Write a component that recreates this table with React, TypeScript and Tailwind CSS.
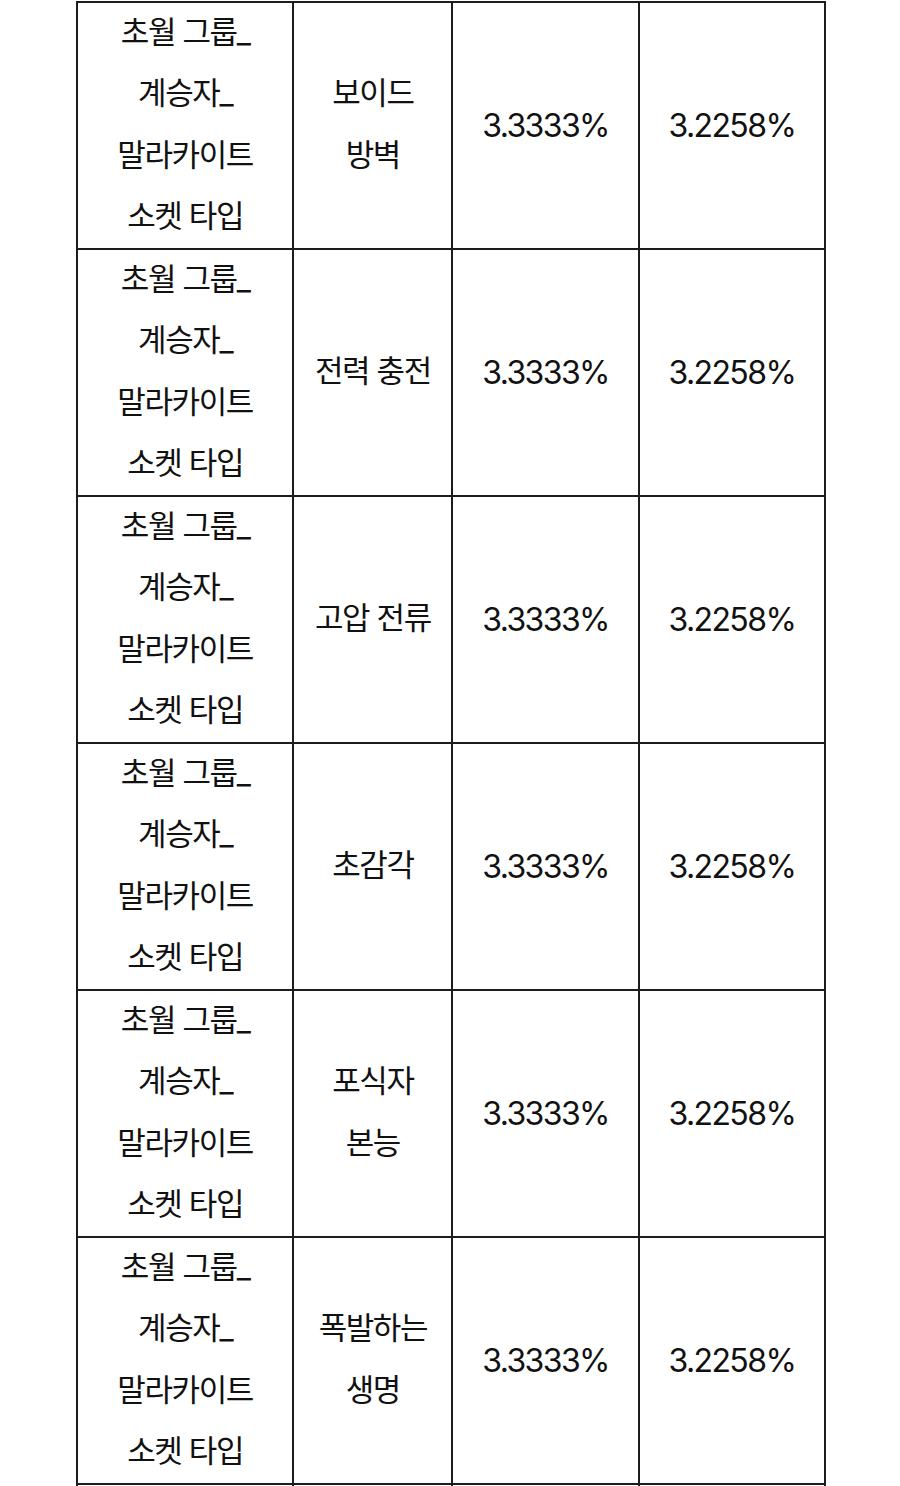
import React from 'react'

interface Row {
    skill: string[];
    rateA: string;
    rateB: string;
}

const groupLines = ["초월 그룹_", "계승자_", "말라카이트", "소켓 타입"];

const rows: Row[] = [
    { skill: ["보이드", "방벽"], rateA: "3.3333%", rateB: "3.2258%" },
    { skill: ["전력 충전"], rateA: "3.3333%", rateB: "3.2258%" },
    { skill: ["고압 전류"], rateA: "3.3333%", rateB: "3.2258%" },
    { skill: ["초감각"], rateA: "3.3333%", rateB: "3.2258%" },
    { skill: ["포식자", "본능"], rateA: "3.3333%", rateB: "3.2258%" },
    { skill: ["폭발하는", "생명"], rateA: "3.3333%", rateB: "3.2258%" },
];

const cell = "border-2 border-[#1c1c1c] p-0 text-center align-middle";

export default function App() {
    return (
        <div className="h-[1486px] overflow-hidden bg-white pt-px">
            <table
                className="ml-[76px] w-[750px] table-fixed border-collapse text-[31px] leading-[61.25px] tracking-[-0.045em] text-[#111]"
                style={{ fontFamily: '"Inter", "Noto Sans CJK KR", "Noto Sans", sans-serif' }}
            >
                <colgroup>
                    <col className="w-[216px]" />
                    <col className="w-[159px]" />
                    <col className="w-[186px]" />
                    <col className="w-[186px]" />
                </colgroup>
                <tbody>
                    {rows.map((row, index) => (
                        <tr key={index}>
                            {/* Group name */}
                            <td className={cell}>
                                {groupLines.map((line) => (
                                    <div key={line} className="-translate-y-0.5">{line}</div>
                                ))}
                            </td>
                            {/* Skill */}
                            <td className={cell}>
                                {row.skill.map((line) => (
                                    <div key={line} className="-translate-y-0.5">{line}</div>
                                ))}
                            </td>
                            <td className={`${cell} text-[32px] tracking-[-0.05em]`}>{row.rateA}</td>
                            <td className={`${cell} text-[32px] tracking-[-0.05em]`}>{row.rateB}</td>
                        </tr>
                    ))}
                    {/* next row, cut off by the page edge */}
                    <tr className="h-[245px]">
                        <td className={cell}></td>
                        <td className={cell}></td>
                        <td className={cell}></td>
                        <td className={cell}></td>
                    </tr>
                </tbody>
            </table>
        </div>
    )
}
